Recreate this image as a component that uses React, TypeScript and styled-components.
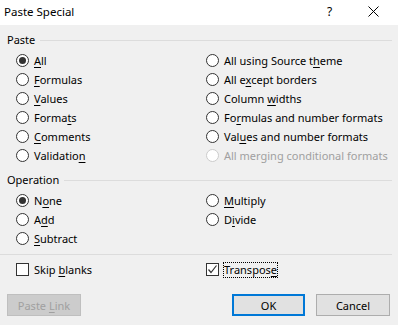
import React, { FC } from 'react';
import styled, { createGlobalStyle, css } from 'styled-components';

const GlobalStyle = createGlobalStyle`
  html, body {
    margin: 0;
    padding: 0;
    background: #f0f0f0;
  }
  body {
    font-family: 'Noto Sans', 'Open Sans', sans-serif;
    font-size: 11px;
    color: #000;
  }
`;

// accelerator text: the char after "&" is underlined
const Accel: FC<{ text: string }> = ({ text }) => {
  const i = text.indexOf('&');
  if (i < 0) return <span>{text}</span>;
  return (
    <span>
      {text.slice(0, i)}
      <Underline>{text.charAt(i + 1)}</Underline>
      {text.slice(i + 2)}
    </span>
  );
};

const pasteLeft = ['&All', '&Formulas', '&Values', 'Forma&ts', '&Comments', 'Validatio&n'];
const pasteRight = [
  'All using Source t&heme',
  'All e&xcept borders',
  'Column &widths',
  'Fo&rmulas and number formats',
  'Val&ues and number formats',
];
const opLeft = ['N&one', 'A&dd', '&Subtract'];
const opRight = ['&Multiply', 'D&ivide'];

const Radio: FC<{ label: string; checked?: boolean; disabled?: boolean }> = ({
  label,
  checked,
  disabled,
}) => (
  <Option disabled={disabled}>
    <Circle checked={checked} disabled={disabled} />
    <Accel text={label} />
  </Option>
);

export default function App() {
  return (
    <>
      <GlobalStyle />
      <Window>
        <TitleBar>
          <Title>Paste Special</Title>
          <Help>?</Help>
          <Close>
            <svg width="11" height="11" viewBox="0 0 11 11">
              <path d="M0.5 0.5 L10.5 10.5 M10.5 0.5 L0.5 10.5" stroke="#000" strokeWidth="1" />
            </svg>
          </Close>
        </TitleBar>
        <Body>
          <GroupHeader>
            <span>Paste</span>
            <HeaderLine />
          </GroupHeader>
          <OptionGrid rows={6}>
            <Column>
              {pasteLeft.map((l, i) => (
                <Radio key={l} label={l} checked={i === 0} />
              ))}
            </Column>
            <Column>
              {pasteRight.map(l => (
                <Radio key={l} label={l} />
              ))}
              <Radio label="All merging conditional formats" disabled />
            </Column>
          </OptionGrid>

          <GroupHeader gap={7}>
            <span>Operation</span>
            <HeaderLine />
          </GroupHeader>
          <OptionGrid rows={3} top={3}>
            <Column>
              {opLeft.map((l, i) => (
                <Radio key={l} label={l} checked={i === 0} />
              ))}
            </Column>
            <Column>
              {opRight.map(l => (
                <Radio key={l} label={l} />
              ))}
            </Column>
          </OptionGrid>

          <Divider />

          <OptionGrid rows={1} top={5}>
            <Column>
              <Option>
                <Box />
                <Accel text="Skip &blanks" />
              </Option>
            </Column>
            <Column>
              <Option>
                <Box>
                  <svg width="11" height="11" viewBox="0 0 11 11">
                    <path d="M1.5 5.5 L4 8.5 L9.5 1.5" fill="none" stroke="#333" strokeWidth="1.2" />
                  </svg>
                </Box>
                <FocusLabel>
                  <Accel text="Transpos&e" />
                </FocusLabel>
              </Option>
            </Column>
          </OptionGrid>

          <ButtonRow>
            <Button disabled>
              <Accel text="Paste &Link" />
            </Button>
            <Spacer />
            <Button primary>OK</Button>
            <Button>Cancel</Button>
          </ButtonRow>
        </Body>
      </Window>
    </>
  );
}

const Window = styled.div`
  width: 398px;
  height: 325px;
  background: #f0f0f0;
  overflow: hidden;
  display: flex;
  flex-direction: column;
`;

const TitleBar = styled.div`
  height: 25px;
  background: #fff;
  display: flex;
  align-items: center;
  padding: 0 0 0 4px;
`;

const Title = styled.div`
  flex: 1;
  font-size: 11.5px;
  line-height: 16px;
  margin-top: -1px;
`;

const Help = styled.div`
  width: 12px;
  font-size: 12px;
  line-height: 16px;
  margin-right: 29px;
  margin-top: -2px;
`;

const Close = styled.div`
  width: 11px;
  height: 11px;
  margin-right: 19px;
  margin-top: -2px;
  display: flex;
`;

const Body = styled.div`
  display: flex;
  flex-direction: column;
  padding-top: 7px;
`;

const GroupHeader = styled.div<{ gap?: number }>`
  display: flex;
  align-items: center;
  height: 16px;
  line-height: 16px;
  padding: 0 6px 0 7px;
  margin-top: ${p => p.gap ?? 0}px;
  gap: 5px;
`;

const HeaderLine = styled.div`
  flex: 1;
  height: 1px;
  background: #dcdcdc;
`;

const OptionGrid = styled.div<{ rows: number; top?: number }>`
  display: grid;
  grid-template-columns: 190px 1fr;
  padding-left: 16px;
  margin-top: ${p => p.top ?? 3}px;
  height: ${p => p.rows * 19}px;
`;

const Column = styled.div`
  display: flex;
  flex-direction: column;
`;

const Option = styled.div<{ disabled?: boolean }>`
  height: 19px;
  display: flex;
  align-items: center;
  gap: 5px;
  white-space: nowrap;
  color: ${p => (p.disabled ? '#a0a0a0' : '#000')};
`;

const Circle = styled.span<{ checked?: boolean; disabled?: boolean }>`
  box-sizing: border-box;
  width: 13px;
  height: 13px;
  flex: none;
  border-radius: 50%;
  border: 1px solid ${p => (p.disabled ? '#cccccc' : '#333')};
  background: #fff;
  display: flex;
  align-items: center;
  justify-content: center;
  ${p =>
    p.checked &&
    css`
      &:after {
        content: '';
        width: 7px;
        height: 7px;
        border-radius: 50%;
        background: #333;
      }
    `}
`;

const Box = styled.span`
  box-sizing: border-box;
  width: 13px;
  height: 13px;
  flex: none;
  border: 1px solid #333;
  background: #fff;
  display: flex;
  align-items: center;
  justify-content: center;
`;

const FocusLabel = styled.span`
  outline: 1px dotted #000;
  outline-offset: 0;
  line-height: 14px;
`;

const Underline = styled.span`
  text-decoration: underline;
  text-underline-offset: 2px;
`;

const Divider = styled.div`
  height: 1px;
  background: #dcdcdc;
  margin: 6px 6px 0 0;
`;

const ButtonRow = styled.div`
  display: flex;
  padding: 0 8px 0 7px;
  margin-top: 15px;
  gap: 11px;
`;

const Spacer = styled.div`
  flex: 1;
`;

const Button = styled.div<{ primary?: boolean; disabled?: boolean }>`
  box-sizing: border-box;
  width: 74px;
  height: 22px;
  display: flex;
  align-items: center;
  justify-content: center;
  background: #e1e1e1;
  border: 1px solid #adadad;
  font-size: 11px;
  ${p =>
    p.primary &&
    css`
      border: 2px solid #0078d7;
      width: 73px;
    `}
  ${p =>
    p.disabled &&
    css`
      background: #cccccc;
      border-color: #bfbfbf;
      color: #a0a0a0;
    `}
`;
